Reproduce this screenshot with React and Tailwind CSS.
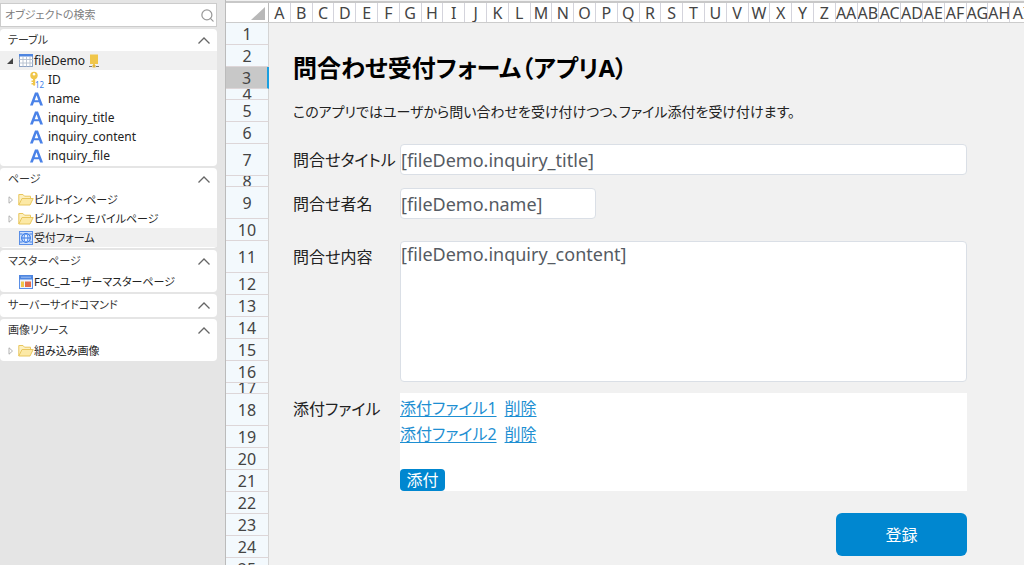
import { Search } from "lucide-react"

const columns = [
  ..."ABCDEFGHIJKLMNOPQRSTUVWXYZ".split(""),
  "AA", "AB", "AC", "AD", "AE", "AF", "AG", "AH", "AI",
]

const heights = {
  normal: "h-[22px]",
  small: "h-[11px]",
  tall: "h-8",
}

const rowSizes = { 4: "small", 7: "tall", 8: "small", 9: "tall", 11: "tall", 17: "small", 18: "tall" }
const rows = Array.from({ length: 25 }, (_, i) => i + 1)

function TableIcon() {
  return (
    <svg className="w-[14px] h-[13px] shrink-0" viewBox="0 0 14 13">
      <rect x="0.5" y="0.5" width="13" height="12" fill="#fff" stroke="#8ea3c4" />
      <rect x="0" y="0" width="14" height="2.5" fill="#4f86e0" />
      <path d="M4 2.5v10M7.500 2.5v10M11 2.5v10M0 5.500h14M0 9h14" stroke="#b4bfce" strokeWidth="0.900" />
    </svg>
  )
}

function DatabaseIcon() {
  return (
    <svg className="w-[10px] h-[14px] shrink-0" viewBox="0 0 10 14">
      <path d="M1 0.500h8v9.500h-8z" fill="#f0c64a" />
      <path d="M4 9h2v2H4z" fill="#f0c64a" />
      <path d="M0 12.500h3M7 12.500h3" stroke="#777" strokeWidth="1.200" />
      <rect x="3.500" y="11" width="3" height="2.500" fill="#e0b53c" />
    </svg>
  )
}

function KeyIcon() {
  return (
    <svg className="w-[15px] h-[18px] shrink-0" viewBox="0 0 15 18">
      <circle cx="4" cy="4.500" r="3.700" fill="#f0c64a" />
      <circle cx="4" cy="3.200" r="1.200" fill="#fff" />
      <path d="M3 7.500h2.200v6.500l-1.100 1-1.100-1zM1.500 9.500H3V11H1.500zM1.500 12H3v1.500H1.500z" fill="#f0c64a" />
      <text x="5" y="17" fontSize="8" fill="#3f7fe8" fontFamily="Noto Sans, sans-serif">12</text>
    </svg>
  )
}

function TextTypeIcon() {
  return (
    <svg className="w-[13px] h-[14px] shrink-0" viewBox="0 0 13 14">
      <path
        fillRule="evenodd"
        d="M5 0.500h3L13 13.500h-2.800L9 10.200H4L2.800 13.500H0zM6.500 3.200L4.700 8.200h3.600z"
        fill="#4a82e8"
      />
    </svg>
  )
}

function FolderIcon() {
  return (
    <svg className="w-4 h-[13px] shrink-0" viewBox="0 0 16 13">
      <path d="M0.800 12V1.500H5l1.500 1.700h6v2.300" fill="#fdf0c0" stroke="#e9c75e" />
      <path d="M0.800 12L4 5.500h11.200L12 12z" fill="#fce9a6" stroke="#e9c75e" strokeLinejoin="round" />
    </svg>
  )
}

function PageIcon() {
  return (
    <svg className="w-[14px] h-[14px] shrink-0" viewBox="0 0 14 14">
      <rect x="0.500" y="0.500" width="13" height="13" fill="#cfe0fb" stroke="#5b8fe6" />
      <path d="M1 3h2.500M10.500 3H13M1 11h2.500M10.500 11H13" stroke="#3f7fe8" />
      <circle cx="7" cy="7" r="4.300" fill="#e9f2ff" stroke="#3f7fe8" strokeWidth="1.300" />
      <ellipse cx="7" cy="7" rx="2" ry="4.300" fill="none" stroke="#3f7fe8" strokeWidth="0.900" />
      <path d="M2.700 7h8.600" stroke="#3f7fe8" strokeWidth="1.100" />
    </svg>
  )
}

function MasterPageIcon() {
  return (
    <svg className="w-[14px] h-[14px] shrink-0" viewBox="0 0 14 14">
      <rect x="0.500" y="0.500" width="13" height="13" fill="#eef4ff" stroke="#5b8fe6" />
      <rect x="0" y="0" width="14" height="4.500" fill="#4f86e0" />
      <path d="M2 2.200h10" stroke="#b9d2fa" strokeWidth="0.800" />
      <rect x="2" y="6.500" width="3" height="5.500" fill="#f0c64a" />
      <rect x="6" y="6.500" width="6" height="5.500" fill="#e36b4a" />
    </svg>
  )
}

function Arrow({ open }) {
  return (
    <svg className="w-2 h-2 shrink-0" viewBox="0 0 8 8">
      {open ? (
        <path d="M7 1v6H1z" fill="#444" />
      ) : (
        <path d="M3 0.800v6.400L6.500 4z" fill="#fff" stroke="#aaa" strokeWidth="0.900" />
      )}
    </svg>
  )
}

function Section({ title, children }) {
  return (
    <section className="bg-white rounded-sm pb-px">
      <button type="button" className="flex items-center justify-between w-full h-[22px] pl-2 pr-[7px] text-[#333]">
        <span className="text-[11px]">{title}</span>
        <svg className="w-3 h-[7px]" viewBox="0 0 12 7">
          <path d="M0.500 6.500L6 1l5.500 5.500" fill="none" stroke="#666" strokeWidth="1.300" />
        </svg>
      </button>
      {children && <ul>{children}</ul>}
    </section>
  )
}

function TreeItem({ icon, label, arrow, open, active, extra }) {
  return (
    <li className={`flex items-center h-[19px] pl-[6px] ${active ? "bg-[#f0f0f0]" : ""}`}>
      <span className="flex w-3 shrink-0">{arrow && <Arrow open={open} />}</span>
      {icon}
      <span className={`whitespace-nowrap ${extra ? "text-[12px]" : "text-[11px]"}`}>{label}</span>
      {extra && <span className="ml-1">{extra}</span>}
    </li>
  )
}

function FieldItem({ icon, label }) {
  return (
    <li className="flex items-center gap-1 h-[19px] pl-[30px]">
      <span className="flex w-[14px] shrink-0">{icon}</span>
      <span>{label}</span>
    </li>
  )
}

function Sidebar() {
  return (
    <aside className="w-[225px] shrink-0 pr-2 pt-[3px] text-[12px] leading-4 text-[#222]">
      <label className="flex items-center h-6 mb-[2px] pl-1 pr-px bg-white border border-[#ccc]">
        <input
          type="text"
          aria-label="オブジェクトの検索"
          placeholder="オブジェクトの検索"
          className="flex-1 min-w-0 text-[11px] outline-none placeholder:text-[#808080]"
        />
        <Search className="w-[15px] h-[15px] text-[#999]" strokeWidth={2} />
      </label>

      <div className="flex flex-col gap-[2px]">
        <Section title="テーブル">
          <TreeItem
            arrow
            open
            active
            icon={<span className="mx-px"><TableIcon /></span>}
            label="fileDemo"
            extra={<DatabaseIcon />}
          />
          <FieldItem icon={<KeyIcon />} label="ID" />
          <FieldItem icon={<TextTypeIcon />} label="name" />
          <FieldItem icon={<TextTypeIcon />} label="inquiry_title" />
          <FieldItem icon={<TextTypeIcon />} label="inquiry_content" />
          <FieldItem icon={<TextTypeIcon />} label="inquiry_file" />
        </Section>
        <Section title="ページ">
          <TreeItem arrow icon={<FolderIcon />} label="ビルトイン ページ" />
          <TreeItem arrow icon={<FolderIcon />} label="ビルトイン モバイルページ" />
          <TreeItem active icon={<span className="mx-px"><PageIcon /></span>} label="受付フォーム" />
        </Section>
        <Section title="マスターページ">
          <TreeItem icon={<span className="mx-px"><MasterPageIcon /></span>} label="FGC_ユーザーマスターページ" />
        </Section>
        <Section title="サーバーサイドコマンド" />
        <Section title="画像リソース">
          <TreeItem arrow icon={<FolderIcon />} label="組み込み画像" />
        </Section>
      </div>
    </aside>
  )
}

function ColumnHeader() {
  return (
    <div className="flex h-[22px] shrink-0 bg-white border-t-2 border-b border-t-[#c8c8c8] border-b-[#ccc] overflow-hidden">
      <div className="flex items-end justify-end w-[43px] shrink-0 border-r border-[#bbb] pr-[3px] pb-[2px]">
        <svg className="w-[14px] h-[13px]" viewBox="0 0 14 13">
          <path d="M14 0v13H0z" fill="#b8b8b8" />
        </svg>
      </div>
      <div className="flex flex-1 min-w-0 -mr-2">
        {columns.map((c) => (
          <div
            key={c}
            className="flex-1 min-w-0 overflow-hidden whitespace-nowrap border-r border-[#d4d4dc] text-center text-base leading-5 text-[#444]"
          >
            {c}
          </div>
        ))}
      </div>
    </div>
  )
}

function RowHeader() {
  return (
    <div className="w-[43px] shrink-0">
      {rows.map((n) => (
        <div
          key={n}
          className={`flex items-center justify-center overflow-hidden border-b border-b-[#ddd6d8] text-base leading-5 text-[#444] ${
            heights[rowSizes[n] || "normal"]
          } ${n === 3 ? "bg-[#c8c8c8] border-r-2 border-r-[#1a9fe0]" : "bg-[#f3f9fd] border-r border-r-[#d4d4d4]"}`}
        >
          {n}
        </div>
      ))}
    </div>
  )
}

const fieldClass = "block bg-white border border-[#dadfe6] rounded text-[18px] text-[#555b63] outline-none"

function InquiryForm() {
  return (
    <form className="flex-1 min-w-0 pl-6 pr-[57px] pt-[29px] text-[16px] leading-6 text-[#222]">
      <h1 className="text-[24px] leading-8 font-bold text-black">問合わせ受付フォーム（アプリA）</h1>
      <p className="mt-4 text-[14px]">このアプリではユーザから問い合わせを受け付けつつ、ファイル添付を受け付けます。</p>

      <div className="grid grid-cols-[107px_minmax(0,1fr)] mt-5">
        <label htmlFor="title" className="pt-1 whitespace-nowrap">問合せタイトル</label>
        <input id="title" defaultValue="[fileDemo.inquiry_title]" className={`${fieldClass} w-full h-[31px] mb-[13px]`} />

        <label htmlFor="name" className="pt-1">問合せ者名</label>
        <input id="name" defaultValue="[fileDemo.name]" className={`${fieldClass} w-[196px] h-[31px] mb-[22px]`} />

        <label htmlFor="content" className="pt-1">問合せ内容</label>
        <textarea
          id="content"
          defaultValue="[fileDemo.inquiry_content]"
          className={`${fieldClass} w-full h-[141px] mb-[11px] resize-none`}
        />

        <span className="pt-1">添付ファイル</span>
        <div className="h-[98px] bg-white pt-[2px] leading-[26px] text-[#1e8fd2]">
          <div className="flex gap-2">
            <a href="#file1" className="underline underline-offset-2">添付ファイル1</a>
            <a href="#delete1" className="underline underline-offset-2">削除</a>
          </div>
          <div className="flex gap-2">
            <a href="#file2" className="underline underline-offset-2">添付ファイル2</a>
            <a href="#delete2" className="underline underline-offset-2">削除</a>
          </div>
          <button type="button" className="block mt-[22px] w-[45px] h-[22px] rounded bg-[#0087d0] text-white leading-[22px]">
            添付
          </button>
        </div>
      </div>

      <div className="flex justify-end mt-[22px]">
        <button type="submit" className="w-[131px] h-[43px] rounded-md bg-[#0087d0] text-white">
          登録
        </button>
      </div>
    </form>
  )
}

export default function App() {
  return (
    <div className="flex h-screen overflow-hidden bg-[#e5e5e5] font-['Noto_Sans','Noto_Sans_CJK_JP',sans-serif] [font-feature-settings:'palt']">
      <Sidebar />
      <main className="flex flex-col flex-1 min-w-0 pt-px border-l border-[#bbb] bg-[#f1f1f1]">
        <ColumnHeader />
        <div className="flex flex-1 min-h-0">
          <RowHeader />
          <InquiryForm />
        </div>
      </main>
    </div>
  )
}
